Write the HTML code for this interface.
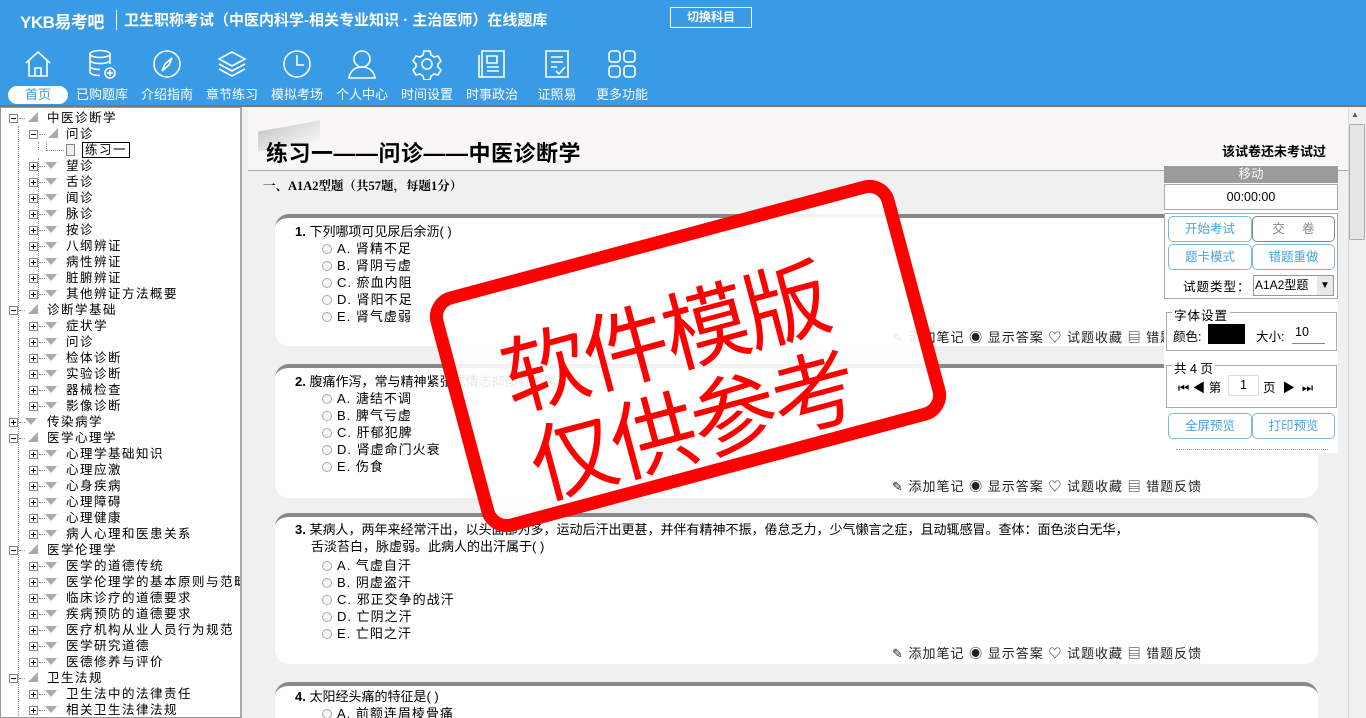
<!DOCTYPE html>
<html><head><meta charset="utf-8"><style>
*{margin:0;padding:0;box-sizing:border-box}
html,body{width:1366px;height:718px;overflow:hidden}
body{background:#f0f0f0;font-family:"Liberation Sans","Noto Sans CJK SC",sans-serif;font-size:13px;color:#000;position:relative}
.a{position:absolute;white-space:nowrap}
#hd{position:absolute;left:0;top:0;width:1366px;height:106px;background:#399be6}
.nav{position:absolute;top:48px;width:60px;text-align:center;color:#fff;font-size:13px}
.nav svg{display:block;margin:0 auto 6px;width:32px;height:32px}
.nav span{display:block;height:18px;line-height:18px}
#left{position:absolute;left:0;top:107px;width:242px;height:611px;background:#fff;border:1px solid #999;border-right:2px solid #aaa}
.tr{position:absolute;height:16px;line-height:16px;font-size:12.5px;letter-spacing:1.5px;white-space:nowrap}
.bx{position:absolute;top:4px;width:9px;height:9px;border:1px solid #888;background:#fff}
.bx:before{content:"";position:absolute;left:1px;top:3px;width:5px;height:1px;background:#000}
.bx.p:after{content:"";position:absolute;left:3px;top:1px;width:1px;height:5px;background:#000}
.dl{position:absolute;top:8px;width:6px;border-top:1px dotted #888}
.tri{position:absolute;top:4px;width:0;height:0;border-left:6px solid transparent;border-right:6px solid transparent;border-top:7px solid #aaa}
.tri2{position:absolute;top:2px;width:0;height:0;border-left:10px solid transparent;border-bottom:10px solid #aaa}
#main{position:absolute;left:246px;top:107px;width:1102px;height:611px;background:#f0f0f0}
.card{position:absolute;left:275px;width:1043px;background:#fff;border-radius:14px;border-top:4px solid #888}
.q{position:absolute;font-size:13px;white-space:nowrap}
.opt{position:absolute;font-size:13px;white-space:nowrap;letter-spacing:1px}
.opt i{display:inline-block;width:10px;height:10px;border:1px solid #aaa;border-radius:50%;margin-right:5px;vertical-align:-1px;background:#f6f6f6}
.act{position:absolute;font-size:13px;color:#222;white-space:nowrap;letter-spacing:1px}
.btn{position:absolute;height:26px;border:1px solid #7ab8de;border-radius:5px;color:#4aa3dc;text-align:center;line-height:24px;font-size:12.5px;background:#fff}
</style></head><body>
<div id="hd">
 <div class="a" style="left:20px;top:8px;color:#fff;font-weight:bold;font-size:17px;letter-spacing:-0.5px">YKB易考吧</div>
 <div class="a" style="left:116px;top:10px;width:1px;height:20px;background:#fff"></div>
 <div class="a" style="left:124px;top:9px;color:#fff;font-weight:bold;font-size:15px">卫生职称考试（中医内科学-相关专业知识 · 主治医师）在线题库</div>
 <div class="a" style="left:670px;top:7px;width:82px;height:21px;border:1px solid #fff;color:#fff;font-size:12px;font-weight:bold;text-align:center;line-height:19px">切换科目</div>

 <div class="nav" style="left:8px"><svg viewBox="0 0 32 32" fill="none" stroke="#fff" stroke-width="1.6"><path d="M4 15L16 4l12 11M7 13v15h18V13M13 28v-8h6v8"/></svg><span style="background:#fff;color:#399be6;border-radius:9px">首页</span></div>
 <div class="nav" style="left:72px"><svg viewBox="0 0 32 32" fill="none" stroke="#fff" stroke-width="1.6"><ellipse cx="14" cy="6" rx="10" ry="3.5"/><path d="M4 6v18c0 2 4 3.5 10 3.5M24 6v10M4 12c0 2 4 3.5 10 3.5s10-1.5 10-3.5M4 18c0 2 4 3.5 10 3.5"/><circle cx="24" cy="25" r="5"/><path d="M24 22v6M21 25h6"/></svg><span>已购题库</span></div>
 <div class="nav" style="left:137px"><svg viewBox="0 0 32 32" fill="none" stroke="#fff" stroke-width="1.6"><circle cx="16" cy="16" r="13"/><path d="M21 10l-7 6-3 7 7-6z"/></svg><span>介绍指南</span></div>
 <div class="nav" style="left:202px"><svg viewBox="0 0 32 32" fill="none" stroke="#fff" stroke-width="1.6"><path d="M16 4L3 11l13 7 13-7zM3 16l13 7 13-7M3 21l13 7 13-7"/></svg><span>章节练习</span></div>
 <div class="nav" style="left:267px"><svg viewBox="0 0 32 32" fill="none" stroke="#fff" stroke-width="1.6"><circle cx="16" cy="16" r="13"/><path d="M16 7v10h7"/></svg><span>模拟考场</span></div>
 <div class="nav" style="left:332px"><svg viewBox="0 0 32 32" fill="none" stroke="#fff" stroke-width="1.6"><circle cx="16" cy="11" r="8"/><path d="M3 30c1-7 6-11 13-11s12 4 13 11z"/></svg><span>个人中心</span></div>
 <div class="nav" style="left:397px"><svg viewBox="0 0 32 32" fill="none" stroke="#fff" stroke-width="1.6"><path d="M13 3h6l1 4 3 2 4-1 3 5-3 3v3l3 3-3 5-4-1-3 2-1 4h-6l-1-4-3-2-4 1-3-5 3-3v-3l-3-3 3-5 4 1 3-2z"/><circle cx="16" cy="16" r="5"/></svg><span>时间设置</span></div>
 <div class="nav" style="left:462px"><svg viewBox="0 0 32 32" fill="none" stroke="#fff" stroke-width="1.6"><path d="M6 3h22v26H6zM3 7v22h3M11 8h10v7H11zM11 19h12M11 23h12"/></svg><span>时事政治</span></div>
 <div class="nav" style="left:527px"><svg viewBox="0 0 32 32" fill="none" stroke="#fff" stroke-width="1.6"><path d="M5 3h22v26H5zM10 9h12M10 14h12M10 19h6M15 23l3 3 6-7"/></svg><span>证照易</span></div>
 <div class="nav" style="left:592px"><svg viewBox="0 0 32 32" fill="none" stroke="#fff" stroke-width="1.6"><rect x="3" y="3" width="11" height="11" rx="3"/><rect x="18" y="3" width="11" height="11" rx="3"/><rect x="3" y="18" width="11" height="11" rx="3"/><rect x="18" y="18" width="11" height="11" rx="3"/></svg><span>更多功能</span></div>
</div>
<div class="a" style="left:0;top:105px;width:1366px;height:2px;background:#777"></div>

<div id="left"></div>
<div class="a" style="left:18px;top:126px;height:592px;border-left:1px dotted #999"></div>
<div class="a" style="left:38px;top:142px;height:8px;border-left:1px dotted #999"></div>
<div class="a" style="left:38px;top:158px;height:140px;border-left:1px dotted #999"></div>
<div class="a" style="left:0;top:107px;width:242px;height:611px;overflow:hidden" id="tree"></div>

<div id="main"></div>
<div class="a" style="left:248px;top:108px;width:1100px;height:62px;background:#f8f7f5"></div>
<div class="a" style="left:258px;top:126px;width:62px;height:20px;background:linear-gradient(160deg,#ccc,#f5f5f5);transform:skewY(-10deg)"></div>
<div class="a" style="left:266px;top:136px;font-size:22px;font-weight:bold;letter-spacing:0.5px">练习一——问诊——中医诊断学</div>
<div class="a" style="left:1222px;top:141px;font-size:13px;font-weight:bold">该试卷还未考试过</div>
<div class="a" style="left:248px;top:170px;width:1100px;height:1px;background:#aaa"></div>
<div class="a" style="left:263px;top:176px;font-size:12.5px;font-weight:bold;font-family:'Liberation Serif','Noto Serif CJK SC',serif">一、A1A2型题（共57题，每题1分）</div>

<div class="card" style="top:214px;height:132px"></div>
<div class="q" style="left:295px;top:221px"><b>1.</b> 下列哪项可见尿后余沥( )</div>
<div class="opt" style="left:322px;top:238px"><i></i>A. 肾精不足</div>
<div class="opt" style="left:322px;top:255px"><i></i>B. 肾阴亏虚</div>
<div class="opt" style="left:322px;top:272px"><i></i>C. 瘀血内阻</div>
<div class="opt" style="left:322px;top:289px"><i></i>D. 肾阳不足</div>
<div class="opt" style="left:322px;top:306px"><i></i>E. 肾气虚弱</div>
<div class="act" style="left:892px;top:327px">✎ 添加笔记 ◉ 显示答案 ♡ 试题收藏 ▤ 错题反馈</div>

<div class="card" style="top:364px;height:134px"></div>
<div class="q" style="left:295px;top:371px"><b>2.</b> 腹痛作泻，常与精神紧张或情志抑郁有关属于( )</div>
<div class="opt" style="left:322px;top:388px"><i></i>A. 溏结不调</div>
<div class="opt" style="left:322px;top:405px"><i></i>B. 脾气亏虚</div>
<div class="opt" style="left:322px;top:422px"><i></i>C. 肝郁犯脾</div>
<div class="opt" style="left:322px;top:439px"><i></i>D. 肾虚命门火衰</div>
<div class="opt" style="left:322px;top:456px"><i></i>E. 伤食</div>
<div class="act" style="left:892px;top:476px">✎ 添加笔记 ◉ 显示答案 ♡ 试题收藏 ▤ 错题反馈</div>

<div class="card" style="top:513px;height:151px"></div>
<div class="q" style="left:295px;top:519px"><b>3.</b> 某病人，两年来经常汗出，以头面部为多，运动后汗出更甚，并伴有精神不振，倦怠乏力，少气懒言之症，且动辄感冒。查体：面色淡白无华，</div>
<div class="q" style="left:311px;top:536px">舌淡苔白，脉虚弱。此病人的出汗属于( )</div>
<div class="opt" style="left:322px;top:555px"><i></i>A. 气虚自汗</div>
<div class="opt" style="left:322px;top:572px"><i></i>B. 阴虚盗汗</div>
<div class="opt" style="left:322px;top:589px"><i></i>C. 邪正交争的战汗</div>
<div class="opt" style="left:322px;top:606px"><i></i>D. 亡阴之汗</div>
<div class="opt" style="left:322px;top:623px"><i></i>E. 亡阳之汗</div>
<div class="act" style="left:892px;top:643px">✎ 添加笔记 ◉ 显示答案 ♡ 试题收藏 ▤ 错题反馈</div>

<div class="card" style="top:682px;height:60px"></div>
<div class="q" style="left:295px;top:686px"><b>4.</b> 太阳经头痛的特征是( )</div>
<div class="opt" style="left:322px;top:703px"><i></i>A. 前额连眉棱骨痛</div>

<!-- right panel -->
<div class="a" style="left:1164px;top:165px;width:174px;height:288px;background:#fff"></div>
<div class="a" style="left:1164px;top:166px;width:174px;height:17px;background:#9b9b9b;color:#fff;text-align:center;font-size:12.5px;line-height:17px">移动</div>
<div class="a" style="left:1164px;top:184px;width:174px;height:26px;border:1px solid #aaa;text-align:center;line-height:24px;font-size:12.5px">00:00:00</div>
<div class="a" style="left:1164px;top:213px;width:174px;height:86px;border:1px solid #aaa"></div>
<div class="btn" style="left:1168px;top:216px;width:84px">开始考试</div>
<div class="btn" style="left:1252px;top:216px;width:83px;border-color:#888;color:#888">交 &nbsp; &nbsp; 卷</div>
<div class="btn" style="left:1168px;top:244px;width:84px">题卡模式</div>
<div class="btn" style="left:1252px;top:244px;width:83px">错题重做</div>
<div class="a" style="left:1183px;top:276px;font-size:12.5px;letter-spacing:1px">试题类型：</div>
<div class="a" style="left:1253px;top:275px;width:81px;height:21px;border:1px solid #999;font-size:12px;line-height:19px;padding-left:1px">A1A2型题<span style="position:absolute;right:0;top:0;width:16px;height:19px;background:#e8e8e8;font-size:10px;text-align:center">▼</span></div>
<div class="a" style="left:1166px;top:312px;width:171px;height:39px;border:1px solid #aaa"></div>
<div class="a" style="left:1172px;top:305px;background:#fff;font-size:12.5px;padding:0 2px;letter-spacing:1px">字体设置</div>
<div class="a" style="left:1173px;top:326px;font-size:12.5px">颜色:</div>
<div class="a" style="left:1208px;top:324px;width:37px;height:20px;background:#000"></div>
<div class="a" style="left:1256px;top:326px;font-size:12.5px">大小:</div>
<div class="a" style="left:1292px;top:325px;width:33px;height:19px;border-bottom:1px solid #888;font-size:12.5px;padding-left:3px">10</div>
<div class="a" style="left:1166px;top:365px;width:171px;height:43px;border:1px solid #aaa"></div>
<div class="a" style="left:1172px;top:358px;background:#fff;font-size:12.5px;padding:0 2px">共 4 页</div>
<div class="a" style="left:1178px;top:377px;font-size:12.5px">⏮ ◀ 第</div>
<div class="a" style="left:1228px;top:375px;width:31px;height:21px;border:1px solid #ddd;text-align:center;font-size:12.5px;line-height:19px">1</div>
<div class="a" style="left:1263px;top:377px;font-size:12.5px">页 &nbsp;▶ &nbsp;⏭</div>
<div class="btn" style="left:1168px;top:413px;width:84px">全屏预览</div>
<div class="btn" style="left:1252px;top:413px;width:83px">打印预览</div>
<div class="a" style="left:1176px;top:449px;width:152px;border-top:1px dotted #6b9ed6"></div>

<!-- scrollbar -->
<div class="a" style="left:1348px;top:107px;width:18px;height:611px;background:#f0f0f0;border-left:1px solid #ddd"></div>
<div class="a" style="left:1351px;top:110px;font-size:8px;color:#555">▲</div>
<div class="a" style="left:1349px;top:124px;width:16px;height:116px;background:#e6e6e6;border:1px solid #aaa;border-radius:2px"></div>

<!-- stamp -->
<div class="a" style="left:448px;top:232px;width:480px;height:248px;border:13px solid #f00;border-radius:26px;transform:rotate(-15deg);background:rgba(255,255,255,0.9)"></div>
<div class="a" style="left:497px;top:282px;font-size:86px;color:#f00;transform:rotate(-15deg);font-family:'Noto Sans CJK SC',sans-serif;line-height:100px;letter-spacing:-3px">软件模版</div>
<div class="a" style="left:525px;top:370px;font-size:86px;color:#f00;transform:rotate(-15deg);font-family:'Noto Sans CJK SC',sans-serif;line-height:100px;letter-spacing:-3px">仅供参考</div>

<script>
var rows=[[0,'-','中医诊断学'],[1,'-','问诊'],[2,'','练习一'],[1,'+','望诊'],[1,'+','舌诊'],[1,'+','闻诊'],[1,'+','脉诊'],[1,'+','按诊'],[1,'+','八纲辨证'],[1,'+','病性辨证'],[1,'+','脏腑辨证'],[1,'+','其他辨证方法概要'],[0,'-','诊断学基础'],[1,'+','症状学'],[1,'+','问诊'],[1,'+','检体诊断'],[1,'+','实验诊断'],[1,'+','器械检查'],[1,'+','影像诊断'],[0,'+','传染病学'],[0,'-','医学心理学'],[1,'+','心理学基础知识'],[1,'+','心理应激'],[1,'+','心身疾病'],[1,'+','心理障碍'],[1,'+','心理健康'],[1,'+','病人心理和医患关系'],[0,'-','医学伦理学'],[1,'+','医学的道德传统'],[1,'+','医学伦理学的基本原则与范畴'],[1,'+','临床诊疗的道德要求'],[1,'+','疾病预防的道德要求'],[1,'+','医疗机构从业人员行为规范'],[1,'+','医学研究道德'],[1,'+','医德修养与评价'],[0,'-','卫生法规'],[1,'+','卫生法中的法律责任'],[1,'+','相关卫生法律法规']];
var h='';rows.forEach(function(r,i){var y=3+i*16,lv=r[0],bx=lv==0?9:29;
if(lv==2){h+='<div class="tr" style="left:0;top:'+y+'px;width:240px;overflow:hidden"><div class="a" style="left:46px;top:0;width:18px;height:9px;border-left:1px dotted #888;border-bottom:1px dotted #888"></div><div class="a" style="left:66px;top:2px;width:9px;height:12px;border:1px solid #888;background:#eee"></div><div class="a" style="left:82px;top:0;border:1px solid #000;padding:0 2px;line-height:14px">'+r[2]+'</div></div>';return;}
h+='<div class="tr" style="left:0;top:'+y+'px;width:240px;overflow:hidden"><div class="bx '+(r[1]=='+'?'p':'')+'" style="left:'+bx+'px"></div><div class="dl" style="left:'+(bx+10)+'px"></div>'+(r[1]=='-'?'<div class="tri2" style="left:'+(bx+19)+'px"></div>':'<div class="tri" style="left:'+(bx+16)+'px"></div>')+'<span style="position:absolute;left:'+(lv==0?47:66)+'px">'+r[2]+'</span></div>';});
document.getElementById('tree').innerHTML=h;
</script>
</body></html>
